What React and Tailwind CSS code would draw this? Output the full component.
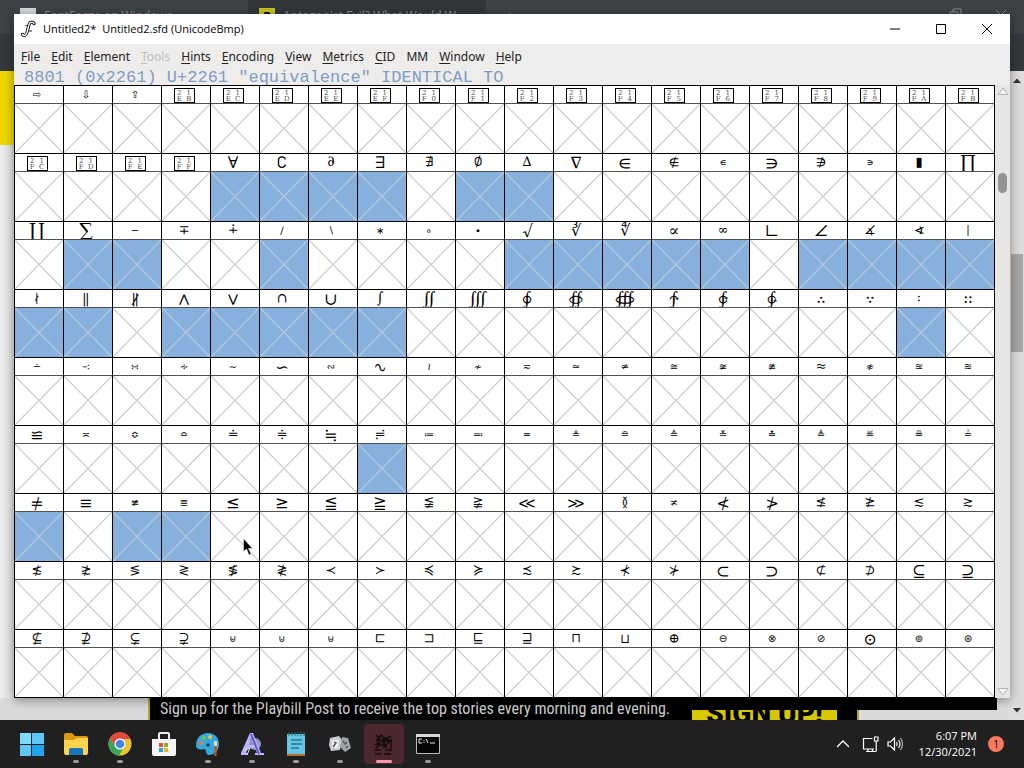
import React from "react";

const FIRST = 0x21e8;
const COUNT = 180;

const SELECTED = new Set([
  0x2200, 0x2201, 0x2202, 0x2203, 0x2205, 0x2206, 0x2211, 0x2212, 0x2215, 0x221a, 0x221b, 0x221c,
  0x221d, 0x221e, 0x2220, 0x2221, 0x2222, 0x2223, 0x2224, 0x2225, 0x2227, 0x2228, 0x2229, 0x222a,
  0x222b, 0x2236, 0x2253, 0x2260, 0x2262, 0x2263,
]);

const LARGE = new Set([
  0x2200, 0x2201, 0x2203, 0x2207, 0x2208, 0x220b, 0x220f, 0x2210, 0x2211, 0x221a, 0x221b, 0x221c,
  0x221d, 0x221f, 0x2220, 0x2225, 0x2226, 0x2227, 0x2228, 0x222a, 0x222c, 0x222d, 0x222e, 0x222f,
  0x2230, 0x2231, 0x2232, 0x2233, 0x2234, 0x2235, 0x2237, 0x223d, 0x223f, 0x224c, 0x2252, 0x2260,
  0x2261, 0x2264, 0x2265, 0x2266, 0x2267, 0x226a, 0x226b, 0x226e, 0x226f, 0x2282, 0x2283, 0x2286,
  0x2287, 0x2299,
]);

const MEDIUM = new Set([
  0x2202, 0x2204, 0x2205, 0x2206, 0x2209, 0x220c, 0x220e, 0x2213, 0x2214, 0x221e,
  0x2221, 0x2222, 0x2223, 0x2224, 0x2229, 0x222b, 0x2236, 0x2248, 0x2250, 0x2251, 0x2253,
  0x2268, 0x2269, 0x226c, 0x2270, 0x2271, 0x2272, 0x2273, 0x2274, 0x2275, 0x2276, 0x2277, 0x2278,
  0x2279, 0x227a, 0x227b, 0x227c, 0x227d, 0x227e, 0x227f, 0x2280, 0x2281, 0x2284, 0x2285, 0x2288,
  0x2289, 0x228a, 0x228b, 0x228f, 0x2290, 0x2291, 0x2292, 0x2293, 0x2294, 0x2295,
]);

const MENU = [
  ["F", "ile"], ["E", "dit"], ["E", "lement"], ["T", "ools"], ["H", "ints"], ["E", "ncoding"],
  ["V", "iew"], ["M", "etrics"], ["C", "ID"], ["", "MM"], ["W", "indow"], ["H", "elp"],
];

function Label({ code }) {
  if (code >= 0x21eb && code <= 0x21ff) {
    const hex = code.toString(16).toUpperCase();
    return (
      <span className="grid h-[15px] w-[21px] grid-cols-2 self-end border border-black pt-px text-[7px] leading-[6px] text-neutral-600">
        {hex.split("").map((d, i) => (
          <span key={i} className="text-center font-['DejaVu_Serif',serif]">{d}</span>
        ))}
      </span>
    );
  }
  const size = LARGE.has(code)
    ? "text-[16px] font-['DejaVu_Math_TeX_Gyre','DejaVu_Sans',sans-serif]"
    : MEDIUM.has(code)
      ? "text-[13px] font-['DejaVu_Math_TeX_Gyre','DejaVu_Sans',sans-serif]"
      : "text-[10px]";
  const char = code === 0x220e ? 0x25ae : code;
  return <span className={size}>{String.fromCharCode(char)}</span>;
}

function Cell({ code }) {
  const on = SELECTED.has(code);
  return (
    <button type="button" aria-pressed={on} className="block border-r border-b border-black bg-white">
      <span className="flex h-[18px] items-center justify-center overflow-hidden border-b border-neutral-600 pr-1 font-['DejaVu_Sans',sans-serif] leading-none text-black">
        <Label code={code} />
      </span>
      <svg
        viewBox="0 0 48 49"
        preserveAspectRatio="none"
        className={on ? "block h-[49px] w-full bg-[#87b0dc] text-[#b3c9df]" : "block h-[49px] w-full text-[#d0d0d0]"}
        aria-hidden="true"
      >
        <path d="M0 0L48 49M48 0L0 49" stroke="currentColor" strokeWidth="1.3" fill="none" />
      </svg>
    </button>
  );
}

function Browser() {
  return (
    <div className="absolute inset-0 flex flex-col bg-[#dededd] font-['Open_Sans',sans-serif]">
      <div className="flex h-[34px] items-start bg-[#3d4244] pt-2 text-[12px] leading-4 text-[#8d9091]">
        <div className="flex w-[248px] items-center gap-2 pl-5">
          <span className="h-4 w-4 bg-[#d5d7d8]" />
          <span>FontForge on Windows</span>
        </div>
        <div className="-mt-2 flex h-[34px] w-[238px] items-start gap-2 bg-[#343739] pt-2 pl-[11px]">
          <span className="h-4 w-4 bg-[#c7c520] text-center text-[13px] font-bold text-black">P</span>
          <span className="whitespace-nowrap">Antagonist Evil? What Would W</span>
        </div>
        <span className="ml-5">+</span>
        <svg className="ml-auto h-4 w-[150px]" viewBox="0 0 150 16" fill="none" stroke="currentColor" aria-hidden="true">
          <path d="M-16 2l5 5 5-5M76 4h8v8h-8zM79 4V1h8v8h-3M122 2l10 10M132 2l-10 10" />
        </svg>
      </div>
      <div className="h-[37px] bg-[#35383a]" />
      <div className="flex flex-1">
        <div className="flex flex-1 flex-col">
          <div className="h-[74px] bg-[#ecd600]" />
          <div className="flex-1 bg-linear-to-r from-[#eeeeee] via-[#d9d9d8] via-[2%] to-[#cfcfcf]" />
          <div className="flex h-[22px] bg-[#dadada] pl-[148px]">
            <div className="flex w-[711px] items-start overflow-hidden border-x-2 border-[#b5a51a] bg-black pl-2.5">
              <span className="w-[532px] font-['Roboto_Condensed','Liberation_Sans_Narrow',Roboto,sans-serif] text-[16px] leading-[22px] whitespace-nowrap text-[#cfcfcf]">
                Sign up for the Playbill Post to receive the top stories every morning and evening.
              </span>
              <span className="h-[40px] w-[145px] bg-[#d6c700] pt-0.5 text-center font-['Roboto',sans-serif] text-[28px] leading-[28px] font-black whitespace-nowrap text-black">
                SIGN UP!
              </span>
            </div>
          </div>
        </div>
        <div className="flex w-3.5 flex-col items-center bg-[#dcdcdc] pt-1.5 pb-1.5">
          <svg className="h-2 w-2" viewBox="0 0 8 8" aria-hidden="true"><path d="M4 1.5L8 6H0z" fill="#333" /></svg>
          <div className="mt-[169px] h-[98px] w-3 bg-[#a6a6a6]" />
          <svg className="mt-auto h-2 w-2" viewBox="0 0 8 8" aria-hidden="true"><path d="M4 6.5L8 2H0z" fill="#333" /></svg>
        </div>
      </div>
      <div className="absolute right-[27px] bottom-2.5 left-[598px] h-3 bg-linear-to-b from-black from-[0%] via-transparent via-[1%] to-transparent" />
      <div className="absolute right-[27px] bottom-2.5 left-[672px] h-3 bg-black" />
    </div>
  );
}

function FontWindow() {
  return (
    <section className="absolute inset-x-3.5 top-3.5 flex flex-col bg-[#eeedec] shadow-[0_2px_10px_rgba(0,0,0,0.4)]">
      <header className="flex h-[30px] items-center bg-white pl-[7px]">
        <svg className="h-[18px] w-[15px]" viewBox="0 0 15 18" fill="none" aria-hidden="true">
          <path d="M13 3.500c-1-2-4-2-5 1L6 12.500c-1 3-3 4-4.500 2" stroke="#111" strokeWidth="3.200" strokeLinecap="round" />
          <path d="M13 3.500c-1-2-4-2-5 1L6 12.500c-1 3-3 4-4.500 2" stroke="#fff" strokeWidth="1.400" strokeLinecap="round" />
          <path d="M4.500 5.500h3M8 11h3" stroke="#111" strokeWidth=".9" />
        </svg>
        <h1 className="ml-[7px] font-['Open_Sans',sans-serif] text-[11px] whitespace-pre text-black">Untitled2*  Untitled2.sfd (UnicodeBmp)</h1>
        <div className="ml-auto flex text-black">
          {[
            ["Minimize", "M0 5h10"],
            ["Maximize", "M.5 .5h9v9h-9z"],
            ["Close", "M0 0l10 10M10 0L0 10"],
          ].map(([name, d]) => (
            <button key={name} type="button" aria-label={name} className="flex h-[30px] w-[46px] items-center justify-center">
              <svg className="h-2.5 w-2.5 overflow-visible" viewBox="0 0 10 10" fill="none" stroke="currentColor"><path d={d} /></svg>
            </button>
          ))}
        </div>
      </header>
      <nav className="flex h-6 items-center gap-[11px] pt-0.5 pl-[7px] font-['Noto_Sans',sans-serif] text-[12px] text-[#222]">
        {MENU.map(([key, rest]) => (
          <button key={key + rest} type="button" disabled={rest === "ools"} className="disabled:text-[#bdbdbb]">
            <span className="underline underline-offset-2">{key}</span>{rest}
          </button>
        ))}
      </nav>
      <p className="h-[17px] pl-2.5 font-['Liberation_Mono',monospace] text-[17px] leading-[19px] whitespace-pre text-[#7f9cc4]">
        8801 (0x2261) U+2261 "equivalence" IDENTICAL TO
      </p>
      <div className="flex">
        <div className="grid flex-1 grid-cols-20 border-t border-l border-black">
          {Array.from({ length: COUNT }, (_, i) => (
            <Cell key={i} code={FIRST + i} />
          ))}
        </div>
        <div className="flex w-[15px] flex-col items-center bg-[#e6e6e4] py-px">
          <svg className="h-2.5 w-3" viewBox="0 0 12 10" aria-hidden="true"><path d="M6 2L11 8.5H1z" fill="#f4f4f2" stroke="#b5b5b3" /></svg>
          <div className="mt-[77px] h-5 w-[9px] rounded-full bg-[#949494]" />
          <svg className="mt-auto h-2.5 w-3" viewBox="0 0 12 10" aria-hidden="true"><path d="M6 8L11 1.5H1z" fill="#f4f4f2" stroke="#b5b5b3" /></svg>
        </div>
      </div>
    </section>
  );
}

const APPS = [
  { name: "Start", art: (
    <g fill="#5cc8f8"><path d="M0 1h11v11H0z" fill="#79dcff" /><path d="M12 1h12v11H12z" /><path d="M0 13h11v11H0z" /><path d="M12 13h12v11H12z" fill="#20a5ec" /></g>
  ) },
  { name: "File Explorer", run: true, art: (
    <g><path d="M0 3q0-2 2-2h6l3 3h11q2 0 2 2v8H0z" fill="#d99a12" /><path d="M0 8h10l3-2h11v15q0 2-2 2H2q-2 0-2-2z" fill="#ffd34e" /><path d="M5 23v-5q0-2 2-2h10q2 0 2 2v5z" fill="#1976bd" /></g>
  ) },
  { name: "Chrome", run: true, art: (
    <g><circle cx="12" cy="12" r="11.5" fill="#e9c52f" /><path d="M2 6.2A11.5 11.5 0 0 0 11 23.5L16.5 14 12 12 7 14.5z" fill="#38a457" /><path d="M2 6.2L7.5 15 12 7h10.5A11.5 11.5 0 0 0 2 6.2z" fill="#df4b3e" /><circle cx="12" cy="12" r="5.5" fill="#fff" /><circle cx="12" cy="12" r="4.3" fill="#4285e8" /></g>
  ) },
  { name: "Microsoft Store", art: (
    <g><path d="M7 7V2q0-1 1-1h8q1 0 1 1v5" fill="none" stroke="#eee" strokeWidth="2" /><path d="M0 7h24v15q0 2-2 2H2q-2 0-2-2z" fill="#f5f5f5" /><path d="M7 11h4v4H7z" fill="#e6562b" /><path d="M12 11h4v4h-4z" fill="#7bb526" /><path d="M7 16h4v4H7z" fill="#22a0dc" /><path d="M12 16h4v4h-4z" fill="#f1b619" /></g>
  ) },
  { name: "Paint", run: true, art: (
    <g><path d="M12 1C5 1 0 6 0 13c0 5 5 5 8 4 3 0 1 6 5 6 6 0 10-5 10-11S19 1 12 1z" fill="#36a9dc" /><circle cx="5" cy="11" r="2" fill="#e57c40" /><circle cx="8" cy="6" r="2" fill="#6fc44b" /><circle cx="14" cy="5" r="2" fill="#f1c33b" /><circle cx="12" cy="13" r="1.8" fill="#124566" /><path d="M18 9h3v5h-3z" fill="#ecd8b0" /><path d="M18 14h3l-.5 10h-2z" fill="#ac5d28" /></g>
  ) },
  { name: "Font editor", run: true, art: (
    <g><circle cx="15" cy="12" r="6" fill="#9298c2" /><path d="M1 21L10 1h3l8 20h3v2h-9v-2h2l-2-5H8l-2 5h2v2H1zM9 13h5l-3-7z" fill="#bbb5ff" /><path d="M11 2l8 20" stroke="#6256cb" strokeWidth="2" /><path d="M5 18l5-2-3 7" stroke="#e8e8ef" fill="none" /></g>
  ) },
  { name: "Notepad", run: true, art: (
    <g><path d="M3 2h18v21H3z" fill="#65c7e1" /><path d="M3 22h18v2H3z" fill="#b86e2c" /><path d="M5 0v4M8 0v4M11 0v4M14 0v4M17 0v4M20 0v4" stroke="#236e86" /><path d="M7 8h11M7 12h11M7 16h8" stroke="#247892" strokeWidth="1.6" /></g>
  ) },
  { name: "Dice", run: true, art: (
    <g><path d="M2 6l9-2 3 4-2 10-9 1-2-6z" fill="#c8cdd0" /><path d="M14 5l6 1 3 10-6 4-5-5z" fill="#9ca5aa" /><path d="M4 8h7l-1 8H4z" fill="#eef0f0" /><path d="M6 10l2 1-3 4M15 9l2 3 2-2M18 16l2-2" stroke="#525c61" strokeWidth="1.5" fill="none" /></g>
  ) },
  { name: "FontForge", run: true, active: true, art: (
    <path d="M4 3l3 3 2-3 4 4 6-3M4 8h14M6 4v11M3 13c4-5 6 5 9-2 2-4 4 0 7-3M9 7l6 9M12 5v10l7-7v9M4 16l5-6M2 18h7M13 18h7M3 22h6M12 22h7" fill="none" stroke="#160b0e" strokeWidth="1.5" />
  ) },
  { name: "Command Prompt", run: true, art: (
    <g><path d="M.5 2.500h23v19H.5z" fill="#050505" stroke="#bbb" /><path d="M0 2h24v3H0z" fill="#d9d9d9" /><path d="M6 7H3v4h3M8 8v1M8 10v1M10 7l2 4M14 11h5" stroke="#eee" fill="none" /></g>
  ) },
];

function Taskbar() {
  return (
    <footer className="flex h-12 items-center bg-[#202020] pr-5 pl-2.5 text-white">
      {APPS.map((app) => (
        <button key={app.name} type="button" aria-label={app.name} className="flex w-11 justify-center">
          <span className={app.active ? "flex h-10 w-10 flex-col items-center rounded bg-[#4c282e] pt-2" : "flex h-10 w-10 flex-col items-center pt-2"}>
            <svg className="h-6 w-6" viewBox="0 0 24 24">{app.art}</svg>
            {app.run && <span className={app.active ? "mt-1 h-[3px] w-4 rounded-full bg-[#f39ab0]" : "mt-1 h-[3px] w-1.5 rounded-full bg-[#9b9b9b]"} />}
          </span>
        </button>
      ))}
      <div className="ml-auto flex items-center">
        <button type="button" aria-label="Show hidden icons" className="mr-[13px]">
          <svg className="block h-3 w-3" viewBox="0 0 12 12" fill="none" stroke="currentColor" strokeWidth="1.3"><path d="M0 9l6-6 6 6" /></svg>
        </button>
        <button type="button" aria-label="Network" className="mr-2">
          <svg className="block h-[17px] w-[17px]" viewBox="0 0 17 17" fill="none" stroke="currentColor" strokeWidth="1.2"><path d="M10.500 2.500H1.500v10.500h10.500M4 15.500h10M6 13v2.500M10.500 13v2.500M12.500 1h3.500v4h-3.500zM14.200 5v10.500" /></svg>
        </button>
        <button type="button" aria-label="Volume" className="mr-4">
          <svg className="block h-4 w-4" viewBox="0 0 16 16" fill="none" stroke="currentColor" strokeWidth="1.2"><path d="M1 6h2.500l4-4v12l-4-4H1zM9.500 6q1.500 2 0 4M11.500 4q3 4 0 8" /><path d="M13.500 2q4 6 0 12" stroke="#aaa" /></svg>
        </button>
        <div className="text-right font-['Open_Sans',sans-serif] text-[11px] leading-4">
          <div>6:07 PM</div>
          <div>12/30/2021</div>
        </div>
        <span className="ml-[11px] flex h-4 w-4 items-center justify-center rounded-full bg-[#f4795f] font-['Open_Sans',sans-serif] text-[10px] text-black">1</span>
      </div>
    </footer>
  );
}

export default function App() {
  return (
    <div className="flex min-h-screen flex-col">
      <main className="relative min-h-[720px] flex-1 overflow-hidden">
        <Browser />
        <FontWindow />
        <svg className="absolute top-[538px] left-[243px] h-[18px] w-3" viewBox="0 0 12 18" aria-hidden="true">
          <path d="M.5 .5v13l3-2.500 2.500 6 2-1-2.500-5.500h4z" fill="#000" stroke="#fff" strokeWidth=".5" />
        </svg>
      </main>
      <Taskbar />
    </div>
  );
}
